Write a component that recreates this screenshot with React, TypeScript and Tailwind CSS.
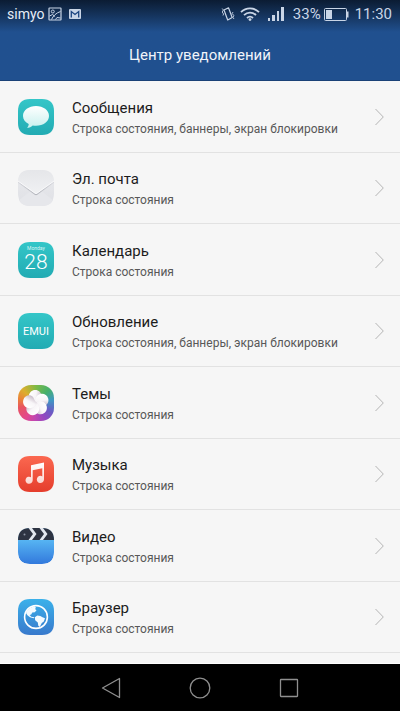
import type { ReactNode } from 'react';

interface AppItem {
  id: string;
  title: string;
  description: string;
  icon: ReactNode;
}

const TILE = 'M12 0H24C32 0 36 4 36 12V24C36 32 32 36 24 36H12C4 36 0 32 0 24V12C0 4 4 0 12 0Z';

const MessagesIcon = () => (
  <svg viewBox="0 0 36 36" className="h-9 w-9">
    <defs>
      <linearGradient id="msg-bg" x1="0" y1="0" x2="0" y2="1">
        <stop offset="0" stopColor="#34c6c8" />
        <stop offset="1" stopColor="#22abb3" />
      </linearGradient>
      <linearGradient id="msg-bubble" x1="0" y1="0" x2="0" y2="1">
        <stop offset="0" stopColor="#ffffff" />
        <stop offset="1" stopColor="#c8f0ee" />
      </linearGradient>
    </defs>
    <path d={TILE} fill="url(#msg-bg)" />
    <path
      d="M18 7C25.200 7 31 11.300 31 16.900C31 22.500 25.200 26.700 18 26.700C16.800 26.700 15.700 26.600 14.700 26.400C13.200 27.900 11.300 28.700 9 28.700C10.200 27.500 10.700 26.300 10.700 24.900C7.300 23.200 5 20.300 5 16.900C5 11.300 10.800 7 18 7Z"
      fill="url(#msg-bubble)"
    />
  </svg>
);

const MailIcon = () => (
  <svg viewBox="0 0 36 36" className="h-9 w-9">
    <defs>
      <linearGradient id="mail-bg" x1="0" y1="0" x2="0" y2="1">
        <stop offset="0" stopColor="#e9eaed" />
        <stop offset="1" stopColor="#dfe0e5" />
      </linearGradient>
      <linearGradient id="mail-flap" x1="0" y1="0" x2="0" y2="1">
        <stop offset="0" stopColor="#e5e6e9" />
        <stop offset="1" stopColor="#f0f1f3" />
      </linearGradient>
      <linearGradient id="mail-shadow" x1="0" y1="0" x2="1" y2="0">
        <stop offset="0" stopColor="#d9dadf" />
        <stop offset="0.500" stopColor="#b4b6bd" />
        <stop offset="1" stopColor="#d9dadf" />
      </linearGradient>
      <clipPath id="mail-clip">
        <path d={TILE} />
      </clipPath>
    </defs>
    <g clipPath="url(#mail-clip)">
      <path d={TILE} fill="url(#mail-bg)" />
      <path d="M0 31L14 20H22L36 31V36H0Z" fill="#e6e7eb" />
      <path d="M0 12L17 24.200Q18 24.900 19 24.200L36 12" fill="none" stroke="url(#mail-shadow)" strokeWidth="1.200" />
      <path d="M0 0H36V11L19 23.200Q18 23.900 17 23.200L0 11Z" fill="url(#mail-flap)" />
      <path d="M0 11L17 23.200Q18 23.900 19 23.200L36 11" fill="none" stroke="#fbfbfc" strokeWidth="0.900" />
    </g>
  </svg>
);

const CalendarIcon = () => (
  <svg viewBox="0 0 36 36" className="h-9 w-9">
    <defs>
      <linearGradient id="cal-bg" x1="0" y1="0" x2="0" y2="1">
        <stop offset="0" stopColor="#34c6c8" />
        <stop offset="1" stopColor="#22abb3" />
      </linearGradient>
    </defs>
    <path d={TILE} fill="url(#cal-bg)" />
    <text x="18" y="8" textAnchor="middle" fontSize="5" fill="#d8f5f4">Monday</text>
    <text x="18" y="27" textAnchor="middle" fontSize="21" fontWeight="300" fill="#ffffff">28</text>
  </svg>
);

const UpdateIcon = () => (
  <svg viewBox="0 0 36 36" className="h-9 w-9">
    <defs>
      <linearGradient id="upd-bg" x1="0" y1="0" x2="0" y2="1">
        <stop offset="0" stopColor="#34c6c8" />
        <stop offset="1" stopColor="#22abb3" />
      </linearGradient>
    </defs>
    <path d={TILE} fill="url(#upd-bg)" />
    <text x="18" y="22" textAnchor="middle" fontSize="11" fill="#ffffff">EMUI</text>
  </svg>
);

const PETALS = [0, 72, 144, 216, 288];

const ThemesIcon = () => (
  <div className="h-9 w-9 overflow-hidden rounded-[13px] bg-[conic-gradient(#7dba45,#45b06c_45deg,#3f97c4_80deg,#6b5bc4_120deg,#9446c0_150deg,#c247b0_185deg,#e3478c_215deg,#e8555f_255deg,#ea8438_285deg,#dcae2e_315deg,#7dba45)]">
    <svg viewBox="0 0 36 36" className="h-9 w-9">
      <defs>
        <linearGradient id="petal" x1="0" y1="0.500" x2="1" y2="0.700">
          <stop offset="0" stopColor="#ffffff" />
          <stop offset="0.500" stopColor="#f8f5f8" />
          <stop offset="1" stopColor="#c4b6c4" />
        </linearGradient>
      </defs>
      {PETALS.map((angle) => (
        <path
          key={angle}
          d="M18.500 18.500C14 18.500 10.600 15 10.800 11.200C11 7.600 13.800 5 17.200 5C20.700 5 23.600 7.700 23.500 11.200C23.300 14.500 20 15 18.500 18.500Z"
          transform={`rotate(${angle} 18 18)`}
          fill="url(#petal)"
        />
      ))}
    </svg>
  </div>
);

const MusicIcon = () => (
  <svg viewBox="0 0 36 36" className="h-9 w-9">
    <defs>
      <linearGradient id="music-bg" x1="0" y1="0" x2="0" y2="1">
        <stop offset="0" stopColor="#fb6850" />
        <stop offset="1" stopColor="#e53d2c" />
      </linearGradient>
      <linearGradient id="music-note" x1="0" y1="0" x2="0" y2="1">
        <stop offset="0" stopColor="#ffffff" />
        <stop offset="1" stopColor="#fbd6d0" />
      </linearGradient>
    </defs>
    <path d={TILE} fill="url(#music-bg)" />
    <path
      d="M13 9.300L26 6.600V23.500A3.600 3.600 0 1 1 24.300 20.400V12.300L14.700 14.300V24.300A3.600 3.600 0 1 1 13 21.200Z"
      fill="url(#music-note)"
    />
  </svg>
);

const VideoIcon = () => (
  <svg viewBox="0 0 36 36" className="h-9 w-9">
    <defs>
      <linearGradient id="video-bg" x1="0" y1="0" x2="0" y2="1">
        <stop offset="0.300" stopColor="#58b8f4" />
        <stop offset="1" stopColor="#3279dc" />
      </linearGradient>
      <clipPath id="video-clip">
        <path d={TILE} />
      </clipPath>
    </defs>
    <g clipPath="url(#video-clip)">
      <path d={TILE} fill="url(#video-bg)" />
      <path d="M0 0H36V12H0Z" fill="#2d3342" />
      <path d="M10.500 0H14L18.500 6L14 12H10.500L15 6Z" fill="#e3e8f0" />
      <path d="M21.500 0H25L29.500 6L25 12H21.500L26 6Z" fill="#e3e8f0" />
      <circle cx="6.500" cy="6.500" r="1" fill="#8991a1" />
    </g>
  </svg>
);

const BrowserIcon = () => (
  <svg viewBox="0 0 36 36" className="h-9 w-9">
    <defs>
      <linearGradient id="web-bg" x1="0" y1="0" x2="0" y2="1">
        <stop offset="0" stopColor="#3bb1ea" />
        <stop offset="1" stopColor="#3879cc" />
      </linearGradient>
    </defs>
    <path d={TILE} fill="url(#web-bg)" />
    <circle cx="18" cy="18" r="11.400" fill="none" stroke="#ffffff" strokeWidth="1.600" />
    <path
      d="M8 14C9 10.500 12.500 8 16.500 7.200L18 8.800L17 10L18.500 11.200L16.800 13.200L14.300 13.600L13.200 15.400L11.600 16L13.300 17.800L16.400 18.300L15.600 19.300L12 18.300L9.400 16.300Z"
      fill="#f4fbff"
    />
    <path
      d="M16.800 18.300L19.300 16.600L22.300 17L24.500 18.300L27 19.300L25.800 22.500L23.800 24L21.700 28L20.300 26.800L19.800 23.400L17.200 21.300Z"
      fill="#f4fbff"
    />
  </svg>
);

const APPS: AppItem[] = [
  { id: 'messages', title: 'Сообщения', description: 'Строка состояния, баннеры, экран блокировки', icon: <MessagesIcon /> },
  { id: 'mail', title: 'Эл. почта', description: 'Строка состояния', icon: <MailIcon /> },
  { id: 'calendar', title: 'Календарь', description: 'Строка состояния', icon: <CalendarIcon /> },
  { id: 'update', title: 'Обновление', description: 'Строка состояния, баннеры, экран блокировки', icon: <UpdateIcon /> },
  { id: 'themes', title: 'Темы', description: 'Строка состояния', icon: <ThemesIcon /> },
  { id: 'music', title: 'Музыка', description: 'Строка состояния', icon: <MusicIcon /> },
  { id: 'video', title: 'Видео', description: 'Строка состояния', icon: <VideoIcon /> },
  { id: 'browser', title: 'Браузер', description: 'Строка состояния', icon: <BrowserIcon /> },
];

function StatusBar() {
  return (
    <div className="flex h-7 items-center justify-between pl-[7px] pr-2 text-[15px] leading-7 text-[#c9d5e6]">
      <div className="flex items-center">
        <span className="text-sm leading-7 text-[#e6edf6]">simyo</span>
        {/* Screenshot notification */}
        <svg viewBox="0 0 14 14" className="ml-1 h-[14px] w-[14px]" fill="none" stroke="currentColor">
          <rect x="1" y="1" width="12" height="12" rx="0.500" strokeWidth="1.200" />
          <circle cx="4.800" cy="4.500" r="1.500" />
          <path d="M1.500 9L4.500 7.500L7 9.500M3.500 12.500C5 9 8 6 12.500 4.500M7.500 12.500L9 10.500L12.500 11" />
        </svg>
        {/* Gmail */}
        <svg viewBox="0 0 12 10" className="ml-[7px] h-[10px] w-3">
          <rect width="12" height="10" rx="1" fill="currentColor" />
          <path d="M2.300 8.500V2.500L6 5.500L9.700 2.500V8.500" fill="none" stroke="#1d4680" strokeWidth="1.300" />
        </svg>
      </div>
      <div className="flex items-center">
        {/* Vibrate */}
        <svg viewBox="0 0 14 14" className="h-[14px] w-[14px]" fill="none" stroke="currentColor">
          <path d="M3 3L7.500 0.800L11.200 10.500L6.700 13Z" strokeWidth="1.200" strokeLinejoin="round" />
          <path d="M1.200 1.500L2.400 3L1.200 5L2.600 7L2 8.500M12 5L11.200 6.500L12.800 8.500L12 10.500L13 12" strokeWidth="0.900" />
        </svg>
        {/* Wi-Fi */}
        <svg viewBox="0 0 20 14" className="ml-[5px] h-[14px] w-5" fill="none" stroke="currentColor">
          <path d="M1 5.200C6 0 14 0 19 5.200" strokeWidth="1.800" />
          <path d="M4 8.200C7.500 4.700 12.500 4.700 16 8.200" strokeWidth="1.800" />
          <path d="M7 11C8.800 9.300 11.200 9.300 13 11" strokeWidth="1.800" />
          <circle cx="10" cy="12.600" r="1.400" fill="currentColor" stroke="none" />
        </svg>
        {/* Signal */}
        <svg viewBox="0 0 18 14" className="ml-2 h-[14px] w-[18px]" fill="currentColor">
          <rect x="0" y="11" width="2" height="3" />
          <rect x="4" y="8" width="3" height="6" />
          <rect x="9" y="4" width="2" height="10" />
          <rect x="13" y="0" width="3" height="14" />
        </svg>
        <span className="ml-[7px]">33%</span>
        {/* Battery */}
        <svg viewBox="0 0 25 13" className="ml-[3px] h-[13px] w-[25px]">
          <rect x="0.500" y="0.500" width="22" height="12" rx="1" fill="none" stroke="currentColor" />
          <rect x="2" y="2" width="6" height="9" fill="currentColor" />
          <path d="M23 3.500H24.500V9.500H23Z" fill="currentColor" />
        </svg>
        <span className="ml-[6px]">11:30</span>
      </div>
    </div>
  );
}

function AppRow({ app }: { app: AppItem }) {
  return (
    <li className="border-b border-[#e2e2e2] odd:h-[72px] even:h-[71px]">
      <button type="button" className="flex h-full w-full items-center pl-[18px] pr-4 text-left">
        <span className="shrink-0">{app.icon}</span>
        <span className="ml-[18px] min-w-0 flex-1 pt-0.5">
          <span className="block text-[15px] leading-[22px] text-[#1c1c1c]">{app.title}</span>
          <span className="block truncate text-xs leading-5 text-[#585858]">{app.description}</span>
        </span>
        <svg viewBox="0 0 9 18" className="h-[18px] w-[9px] shrink-0" fill="none" stroke="#b4b4b4">
          <path d="M0.500 1L8.300 9L0.500 17" />
        </svg>
      </button>
    </li>
  );
}

function NavBar() {
  return (
    <nav className="flex h-[47px] items-center justify-center gap-[67px] bg-black text-[#8f8f8f]">
      <button type="button" aria-label="Назад">
        <svg viewBox="0 0 22 22" className="h-[22px] w-[22px]" fill="none" stroke="currentColor" strokeWidth="1.300" strokeLinejoin="round">
          <path d="M2.500 11L19.500 1.500V20.500Z" />
        </svg>
      </button>
      <button type="button" aria-label="Домой">
        <svg viewBox="0 0 22 22" className="h-[22px] w-[22px]" fill="none" stroke="currentColor" strokeWidth="1.300">
          <circle cx="11" cy="11" r="9.800" />
        </svg>
      </button>
      <button type="button" aria-label="Недавние">
        <svg viewBox="0 0 22 22" className="h-[22px] w-[22px]" fill="none" stroke="currentColor" strokeWidth="1.300">
          <rect x="2.500" y="2.500" width="17" height="17" rx="0.500" />
        </svg>
      </button>
    </nav>
  );
}

export default function App() {
  return (
    <div className="flex min-h-screen flex-col bg-[#f6f6f6] font-['Roboto',sans-serif]">
      <header className="border-b border-[#1a4177] bg-[#20508f] bg-linear-to-b from-[#0b1c33] from-0% to-[#20508f] to-40%">
        <StatusBar />
        <h1 className="h-[52px] text-center text-[15px] leading-[54px] text-[#f0f4fa]">Центр уведомлений</h1>
      </header>
      <main className="flex-1 border-b border-white">
        <ul>
          {APPS.map((app) => (
            <AppRow key={app.id} app={app} />
          ))}
        </ul>
      </main>
      <NavBar />
    </div>
  );
}
